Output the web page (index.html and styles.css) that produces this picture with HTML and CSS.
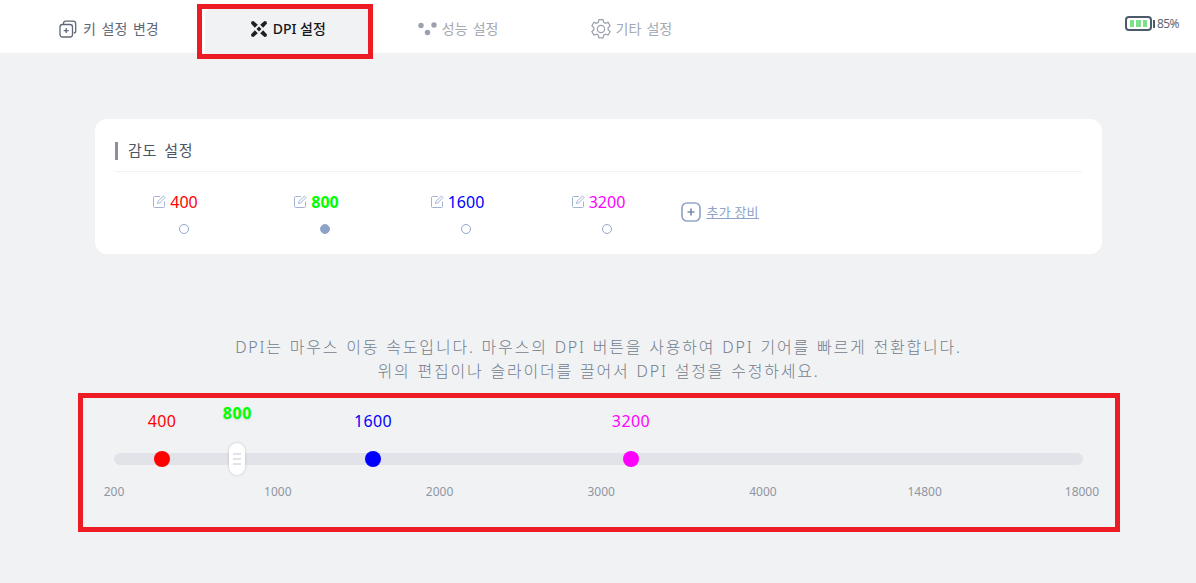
FILE: index.html
```html
<!DOCTYPE html>
<html lang="ko">
<head>
    <meta charset="UTF-8">
    <title>DPI 설정</title>
    <link rel="stylesheet" href="styles.css">
</head>
<body>
    <header class="topbar">
        <nav class="tabs">
            <a class="tab" href="#">
                <svg class="tab-icon" width="18" height="18" viewBox="0 0 18 18" fill="none" stroke="#5f6876" stroke-width="1.3">
                    <rect x="1" y="4.5" width="12.5" height="12.5" rx="2.5"/>
                    <path d="M4.5 4.2V3.2a2 2 0 0 1 2-2h7.6a2.6 2.6 0 0 1 2.6 2.6v7.2a2 2 0 0 1-2 2"/>
                    <path d="M7.2 8v5M4.7 10.7h5"/>
                </svg>
                키 설정 변경
            </a>
            <a class="tab tab-active" href="#">
                <svg class="tab-icon" width="16" height="16" viewBox="0 0 16 16" fill="#1d1f24">
                    <path d="M0.500 0.500L2.500 0 6.800 3.800 3.800 6.800 0 2.500z"/>
                    <path d="M15.500 0.500L16 2.500 12.200 6.800 9.200 3.800 13.500 0z"/>
                    <path d="M0.500 15.500L0 13.500 3.800 9.200 6.800 12.200 2.500 16z"/>
                    <path d="M15.500 15.500L13.500 16 9.200 12.200 12.200 9.200 16 13.500z"/>
                    <path d="M8 5.500L10.500 8 8 10.500 5.500 8z"/>
                </svg>
                DPI 설정
            </a>
            <a class="tab tab-muted" href="#">
                <svg class="tab-icon" width="19" height="14" viewBox="0 0 19 14" fill="#9aa0ad">
                    <circle cx="3" cy="3.5" r="2.7"/>
                    <circle cx="16" cy="3" r="2.7"/>
                    <circle cx="9.5" cy="10.5" r="2.7"/>
                </svg>
                성능 설정
            </a>
            <a class="tab tab-muted" href="#">
                <svg class="tab-icon" width="20" height="20" viewBox="1.500 0.500 17 18" fill="none" stroke="#9aa0ad" stroke-width="1.100">
                    <path d="M8.200 1h3.600l.6 2.400 1.700.9 2.300-.8 1.800 3.100-1.800 1.700v1.900l1.800 1.700-1.800 3.100-2.300-.8-1.700.9-.6 2.400H8.200l-.6-2.400-1.700-.9-2.300.8-1.800-3.100 1.800-1.700V8.300L1.800 6.600l1.800-3.100 2.300.8 1.700-.9z"/>
                    <circle cx="10" cy="9.500" r="3.300"/>
                </svg>
                기타 설정
            </a>
        </nav>
        <div class="battery">
            <div class="battery-body">
                <span class="cell"></span>
                <span class="cell"></span>
                <span class="cell"></span>
            </div>
            <span class="battery-nub"></span>
            <span class="battery-text">85%</span>
        </div>
    </header>

    <main class="content">
        <section class="card">
            <h2 class="card-title">감도 설정</h2>
            <div class="levels">
                <div class="level">
                    <div class="level-value">
                        <svg class="edit-icon" width="13" height="13" viewBox="0 0 13 13" fill="none" stroke="#a3b4d2"><path d="M7 1.500H1.500a1 1 0 0 0-1 1v9a1 1 0 0 0 1 1h9a1 1 0 0 0 1-1V6.500"/><path d="M4.500 8.500l.5-2.200L10.500 1l1.500 1.500L6.700 8z"/></svg>
                        <span class="red">400</span>
                    </div>
                    <span class="radio"></span>
                </div>
                <div class="level">
                    <div class="level-value">
                        <svg class="edit-icon" width="13" height="13" viewBox="0 0 13 13" fill="none" stroke="#a3b4d2"><path d="M7 1.500H1.500a1 1 0 0 0-1 1v9a1 1 0 0 0 1 1h9a1 1 0 0 0 1-1V6.500"/><path d="M4.500 8.500l.5-2.200L10.500 1l1.500 1.500L6.700 8z"/></svg>
                        <span class="green bold">800</span>
                    </div>
                    <span class="radio radio-on"></span>
                </div>
                <div class="level">
                    <div class="level-value">
                        <svg class="edit-icon" width="13" height="13" viewBox="0 0 13 13" fill="none" stroke="#a3b4d2"><path d="M7 1.500H1.500a1 1 0 0 0-1 1v9a1 1 0 0 0 1 1h9a1 1 0 0 0 1-1V6.500"/><path d="M4.500 8.500l.5-2.200L10.500 1l1.500 1.500L6.700 8z"/></svg>
                        <span class="blue">1600</span>
                    </div>
                    <span class="radio"></span>
                </div>
                <div class="level">
                    <div class="level-value">
                        <svg class="edit-icon" width="13" height="13" viewBox="0 0 13 13" fill="none" stroke="#a3b4d2"><path d="M7 1.500H1.500a1 1 0 0 0-1 1v9a1 1 0 0 0 1 1h9a1 1 0 0 0 1-1V6.500"/><path d="M4.500 8.500l.5-2.200L10.500 1l1.500 1.500L6.700 8z"/></svg>
                        <span class="magenta">3200</span>
                    </div>
                    <span class="radio"></span>
                </div>
                <a class="add-device" href="#">
                    <svg width="20" height="20" viewBox="0 0 20 20" fill="none" stroke="#93a7c9" stroke-width="1.700">
                        <rect x="1" y="1" width="18" height="18" rx="5"/>
                        <path d="M10 6.500v7M6.500 10h7" stroke="#7e8da8"/>
                    </svg>
                    <span>추가 장비</span>
                </a>
            </div>
        </section>

        <p class="hint">DPI는 마우스 이동 속도입니다. 마우스의 DPI 버튼을 사용하여 DPI 기어를 빠르게 전환합니다.<br>위의 편집이나 슬라이더를 끌어서 DPI 설정을 수정하세요.</p>

        <section class="slider">
            <div class="track">
                <div class="stop" style="left: 4.95%">
                    <span class="stop-label red">400</span>
                    <span class="dot dot-red"></span>
                </div>
                <div class="stop stop-active" style="left: 12.74%">
                    <span class="stop-label green bold">800</span>
                    <span class="handle"><i></i><i></i><i></i></span>
                </div>
                <div class="stop" style="left: 26.73%">
                    <span class="stop-label blue">1600</span>
                    <span class="dot dot-blue"></span>
                </div>
                <div class="stop" style="left: 53.35%">
                    <span class="stop-label magenta">3200</span>
                    <span class="dot dot-magenta"></span>
                </div>
            </div>
            <div class="ticks">
                <span>200</span>
                <span>1000</span>
                <span>2000</span>
                <span>3000</span>
                <span>4000</span>
                <span>14800</span>
                <span>18000</span>
            </div>
        </section>
    </main>

    <!-- red marker boxes -->
    <div class="marker marker-tab"></div>
    <div class="marker marker-slider"></div>
</body>
</html>
```

FILE: styles.css
```css
* {
    box-sizing: border-box;
}

html, body {
    height: 100%;
}

body {
    margin: 0;
    position: relative;
    overflow: hidden;
    font-family: 'Noto Sans', 'Noto Sans CJK KR', sans-serif;
    background: #f1f2f4;
    color: #5f6876;
}

/* Top bar */
.topbar {
    display: flex;
    justify-content: space-between;
    align-items: flex-start;
    height: 53px;
    padding: 0 17px 0 13px;
    background: #fff;
}

.tabs {
    display: flex;
    padding-top: 8px;
    height: 53px;
}

.tab {
    display: flex;
    align-items: center;
    gap: 6px;
    padding: 0 46px 3px;
    font-size: 14px;
    line-height: 20px;
    word-spacing: 2px;
    color: #5f6876;
    text-decoration: none;
    border-radius: 8px 8px 0 0;
}

.tab-active {
    background: #f1f2f4;
    color: #15171c;
    font-weight: 500;
    word-spacing: 0;
}

.tab-muted {
    gap: 5px;
    color: #a3a8b3;
    word-spacing: 1.5px;
}

.tab-icon {
    flex: none;
}

.battery {
    display: flex;
    align-items: center;
    margin-top: 16px;
    height: 15px;
}

.battery-body {
    display: flex;
    gap: 2px;
    width: 27px;
    height: 15px;
    padding: 2px 3px;
    border: 2px solid #4d5a6c;
    border-radius: 4px;
}

.cell {
    flex: 1;
    background: #7fe08a;
}

.battery-nub {
    width: 2px;
    height: 8px;
    margin-left: 1px;
    background: #4d5a6c;
}

.battery-text {
    margin-left: 2px;
    font-size: 12px;
    line-height: 15px;
    letter-spacing: -0.6px;
}

/* Sensitivity card */
.content {
    padding: 66px 94px 0 95px;
}

.card {
    height: 135px;
    padding: 20px 20px 0;
    background: #fff;
    border-radius: 12px;
}

.card-title {
    margin: 0;
    height: 33px;
    padding: 2px 0 0 13px;
    font-size: 15px;
    font-weight: 400;
    line-height: 18px;
    letter-spacing: 0.6px;
    word-spacing: 3px;
    color: #4d5664;
    border-bottom: 1px solid #f1f2f4;
    position: relative;
}

.card-title::before {
    content: '';
    position: absolute;
    left: 0;
    top: 3px;
    width: 3px;
    height: 18px;
    background: #8b909b;
}

.levels {
    display: flex;
    align-items: flex-start;
    padding-top: 20px;
    margin-left: -1.5px;
}

.level {
    display: flex;
    flex-direction: column;
    align-items: center;
    width: 141px;
}

.level-value {
    position: relative;
    height: 20px;
    font-size: 16px;
    line-height: 20px;
}

/* icon hangs left of the number, the number stays centred over the radio */
.edit-icon {
    position: absolute;
    right: 100%;
    top: 3px;
    margin-right: 4px;
}

.radio {
    width: 10px;
    height: 10px;
    margin-top: 12px;
    border: 1px solid #93a7c9;
    border-radius: 50%;
    background: #fff;
}

.radio-on {
    background: #8ea3c7;
}

.add-device {
    display: flex;
    align-items: center;
    gap: 6px;
    margin: 10px 0 0 3px;
    font-size: 13px;
    line-height: 20px;
    letter-spacing: 0.2px;
    color: #8ea3c7;
}

.add-device span {
    text-decoration: underline;
}

.red { color: #ff0000; }
.green { color: #00ff00; }
.blue { color: #0000ff; }
.magenta { color: #ff00ff; }

.bold {
    font-weight: 700;
}

/* Hint text */
.hint {
    margin: 81px 0 0;
    font-size: 16px;
    font-weight: 300;
    line-height: 24px;
    letter-spacing: 1.8px;
    word-spacing: 1px;
    text-align: center;
    color: #727d8d;
}

/* Slider */
.slider {
    margin: 70px 0 0 19px;
    width: 969px;
}

.track {
    position: relative;
    height: 12px;
    background: #e1e3e9;
    border-radius: 6px;
}

.stop {
    position: absolute;
    top: 6px;
    width: 0;
}

.stop-label {
    position: absolute;
    left: -30px;
    top: -48px;
    width: 60px;
    font-size: 16px;
    line-height: 20px;
    letter-spacing: 0.4px;
    text-align: center;
}

.stop-active .stop-label {
    top: -56px;
    letter-spacing: 0.7px;
    text-shadow: 0 1px 2px rgba(0, 0, 0, 0.15);
}

.dot {
    position: absolute;
    left: -8px;
    top: -8px;
    width: 16px;
    height: 16px;
    border-radius: 50%;
}

.dot-red { background: #ff0000; }
.dot-blue { background: #0000ff; }
.dot-magenta { background: #ff00ff; }

.handle {
    position: absolute;
    left: -8px;
    top: -16px;
    display: flex;
    flex-direction: column;
    justify-content: center;
    align-items: center;
    gap: 3px;
    width: 16px;
    height: 32px;
    background: #fff;
    border-radius: 8px;
    box-shadow: 0 0 3px rgba(0, 0, 0, 0.2);
}

.handle i {
    width: 8px;
    height: 2px;
    background: #e1e3e9;
}

.ticks {
    display: flex;
    margin: 19px 0 0 -20px;
}

.ticks span {
    flex: none;
    width: 161.7px;
    font-size: 12px;
    line-height: 16px;
    text-align: center;
    color: #8f96a3;
}

.ticks span:first-child {
    width: 40px;
    margin-right: 63px;
}

.ticks span:last-child {
    width: 40px;
    margin-left: 56.5px;
}

/* Red marker boxes drawn over the page */
.marker {
    position: absolute;
    border: 5px solid #ed1c24;
    pointer-events: none;
}

.marker-tab {
    left: 197px;
    top: 4px;
    width: 176px;
    height: 55px;
}

.marker-slider {
    left: 78px;
    top: 393px;
    width: 1042px;
    height: 139px;
}
```
